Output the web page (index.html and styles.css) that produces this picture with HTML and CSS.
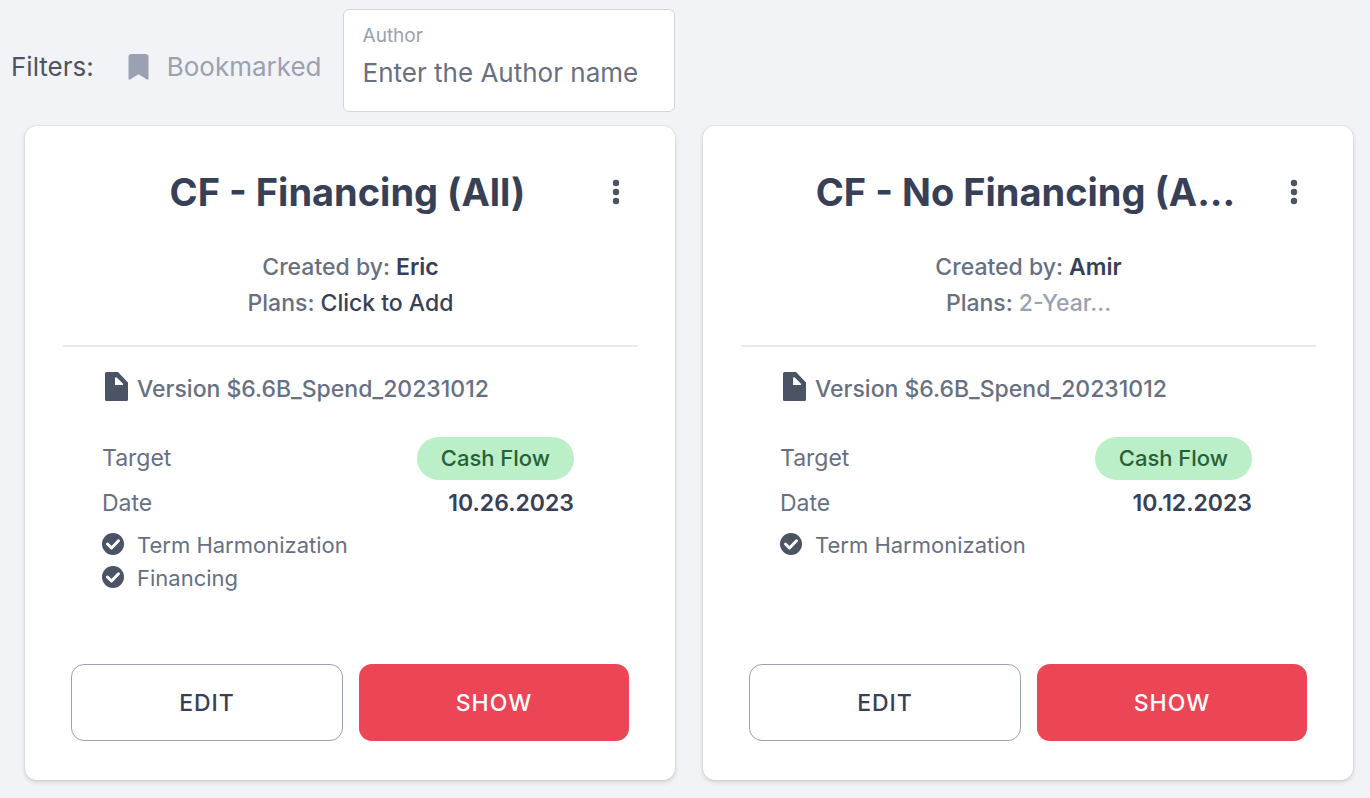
FILE: index.html
```html
<!DOCTYPE html>
<html lang="en">
	<head>
		<meta charset="UTF-8" />
		<meta name="viewport" content="width=device-width, initial-scale=1.0" />
		<title>Scenarios</title>
		<link rel="stylesheet" href="styles.css">
	</head>
	<body>
		<svg class="sprite" aria-hidden="true">
			<symbol id="icon-dots" viewBox="0 0 26 26">
				<circle cx="13" cy="4" r="3.2" />
				<circle cx="13" cy="13" r="3.2" />
				<circle cx="13" cy="22" r="3.2" />
			</symbol>
			<symbol id="icon-file" viewBox="0 0 24 30">
				<path fill-rule="evenodd" d="M1.500 0H13l10 10.500V27.500a1.500 1.500 0 0 1-1.500 1.500h-20A1.500 1.500 0 0 1 0 27.500v-26A1.500 1.500 0 0 1 1.500 0zM10 5.500V13H18V11.800L11.800 5.500z" />
			</symbol>
			<symbol id="icon-check" viewBox="0 0 24 24">
				<circle cx="12" cy="12" r="11" />
				<path d="M6.500 12l4 4 7-7.200" fill="none" stroke="#fff" stroke-width="3" stroke-linecap="round" stroke-linejoin="round" />
			</symbol>
		</svg>

		<div class="filters">
			<span class="filters-label">Filters:</span>
			<button type="button" class="bookmarked">
				<svg class="bookmark-icon" viewBox="0 0 22 26" aria-hidden="true">
					<path d="M3.500 0h14a3 3 0 0 1 3 3v21.600a1 1 0 0 1-1.500.8L10.500 20.300 2 25.400a1 1 0 0 1-1.500-.8V3a3 3 0 0 1 3-3z" />
				</svg>
				Bookmarked
			</button>
			<div class="author-box">
				<label for="author">Author</label>
				<input type="text" id="author" name="author" placeholder="Enter the Author name" />
			</div>
		</div>

		<main class="cards">
			<article class="card">
				<div class="card-header">
					<h2>CF - Financing (All)</h2>
					<button type="button" class="menu-button" aria-label="More options"><svg><use href="#icon-dots" /></svg></button>
				</div>
				<div class="card-info">
					<p>Created by: <strong>Eric</strong></p>
					<p>Plans: <a href="#" class="plan-add">Click to Add</a></p>
				</div>
				<div class="card-details">
					<p class="version"><svg class="file-icon"><use href="#icon-file" /></svg>Version $6.6B_Spend_20231012</p>
					<div class="row target">
						<span>Target</span>
						<span class="badge">Cash Flow</span>
					</div>
					<div class="row">
						<span>Date</span>
						<strong>10.26.2023</strong>
					</div>
					<ul class="options">
						<li><svg><use href="#icon-check" /></svg>Term Harmonization</li>
						<li><svg><use href="#icon-check" /></svg>Financing</li>
					</ul>
				</div>
				<div class="card-actions">
					<button type="button" class="btn btn-edit">EDIT</button>
					<button type="button" class="btn btn-show">SHOW</button>
				</div>
			</article>

			<article class="card">
				<div class="card-header">
					<h2>CF - No Financing (A...</h2>
					<button type="button" class="menu-button" aria-label="More options"><svg><use href="#icon-dots" /></svg></button>
				</div>
				<div class="card-info">
					<p>Created by: <strong>Amir</strong></p>
					<p>Plans: <a href="#" class="plan-name">2-Year...</a></p>
				</div>
				<div class="card-details">
					<p class="version"><svg class="file-icon"><use href="#icon-file" /></svg>Version $6.6B_Spend_20231012</p>
					<div class="row target">
						<span>Target</span>
						<span class="badge">Cash Flow</span>
					</div>
					<div class="row">
						<span>Date</span>
						<strong>10.12.2023</strong>
					</div>
					<ul class="options">
						<li><svg><use href="#icon-check" /></svg>Term Harmonization</li>
					</ul>
				</div>
				<div class="card-actions">
					<button type="button" class="btn btn-edit">EDIT</button>
					<button type="button" class="btn btn-show">SHOW</button>
				</div>
			</article>
		</main>
	</body>
</html>
```
FILE: styles.css
```css
* {
	box-sizing: border-box;
}

body,
h2,
p,
ul {
	margin: 0;
	padding: 0;
}

body,
button,
input {
	font-family: Inter, "Liberation Sans", sans-serif;
}

body {
	background-color: #f2f3f7;
	color: #677083;
	font-size: 23px;
}

.sprite {
	display: none;
}

svg {
	fill: #4b5465;
	flex-shrink: 0;
}

button {
	cursor: pointer;
}

.filters {
	display: flex;
	align-items: center;
	padding: 9px 11px 0;
	font-size: 26px;
}

.filters-label {
	color: #4b5465;
	margin-right: 34px;
	padding-top: 12px;
}

.bookmarked {
	display: flex;
	align-items: center;
	gap: 17px;
	border: none;
	background: none;
	padding: 12px 0 0;
	margin-right: 21px;
	color: #9aa1b1;
	font-size: 26px;
}

.bookmark-icon {
	width: 22px;
	height: 26px;
	fill: #9aa1b1;
}

.author-box {
	width: 332px;
	height: 103px;
	padding: 14px 19px;
	background-color: #ffffff;
	border: 1px solid #d2d5dc;
	border-radius: 6px;
}

.author-box label {
	display: block;
	color: #9aa1b1;
	font-size: 19px;
	line-height: 24px;
}

.author-box input {
	display: block;
	width: 100%;
	height: 48px;
	padding: 0;
	border: none;
	outline: none;
	color: #374056;
	font-size: 26px;
}

.author-box input::placeholder {
	color: #677083;
	opacity: 1;
}

.cards {
	display: grid;
	grid-template-columns: 1fr 1fr;
	gap: 28px;
	padding: 14px 17px 17px 25px;
}

.card {
	display: flex;
	flex-direction: column;
	min-width: 0;
	padding-bottom: 39px;
	background-color: #ffffff;
	border-radius: 12px;
	box-shadow: 0 0 0 1px rgba(0, 0, 0, 0.04), 0 2px 5px rgba(0, 0, 0, 0.14);
}

.card-header {
	display: flex;
	align-items: center;
	gap: 44px;
	padding: 36px 46px 0 111px;
}

.card-header h2 {
	flex: 1;
	min-width: 0;
	overflow: hidden;
	text-overflow: ellipsis;
	white-space: nowrap;
	text-align: center;
	color: #374056;
	font-size: 38px;
	font-weight: 700;
	line-height: 60px;
}

.menu-button {
	width: 26px;
	height: 26px;
	padding: 0;
	border: none;
	background: none;
}

.menu-button svg {
	display: block;
	width: 26px;
	height: 26px;
}

.card-info {
	margin: 27px 37px 0 38px;
	padding-bottom: 24px;
	border-bottom: 2px solid #e8eaef;
	text-align: center;
	font-weight: 500;
	line-height: 36px;
}

.card-info strong,
.row strong {
	color: #374056;
	font-weight: 600;
}

.card-info a {
	text-decoration: none;
}

.plan-add {
	color: #374056;
}

.plan-name {
	color: #9aa1b1;
}

.card-details {
	flex: 1;
	padding: 24px 101px 0 77px;
}

.version {
	display: flex;
	align-items: center;
	gap: 8px;
	padding-left: 3px;
	font-weight: 500;
	line-height: 36px;
}

.file-icon {
	width: 24px;
	height: 30px;
	margin-bottom: 4px;
}

.row {
	display: flex;
	align-items: center;
	justify-content: space-between;
	line-height: 45px;
}

.target {
	margin-top: 29px;
}

.badge {
	padding: 0 24px;
	border-radius: 22px;
	background-color: #bbefc8;
	color: #276038;
	font-size: 22px;
	font-weight: 500;
	line-height: 43px;
}

.options {
	margin: 3px 0 0 -1px;
	list-style: none;
	font-size: 22px;
}

.options li {
	display: flex;
	align-items: center;
	gap: 12px;
	line-height: 33px;
}

.options svg {
	width: 24px;
	height: 24px;
	margin-bottom: 3px;
}

.card-actions {
	display: flex;
	gap: 16px;
	margin-top: 69px;
	padding: 0 46px;
}

.btn {
	flex: 1;
	height: 77px;
	border-radius: 13px;
	font-size: 23px;
	font-weight: 500;
	letter-spacing: 1px;
}

.btn-edit {
	border: 1px solid #9aa1b1;
	background-color: #ffffff;
	color: #374056;
}

.btn-show {
	border: none;
	background-color: #ec4555;
	color: #ffffff;
}
```
